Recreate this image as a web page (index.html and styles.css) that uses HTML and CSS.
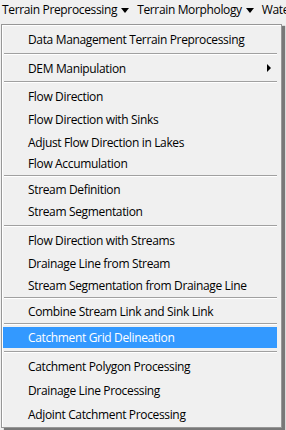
FILE: index.html
```html
<!DOCTYPE html>
<html>
<head>
<meta charset="utf-8">
<link rel="stylesheet" href="styles.css">
</head>
<body>
<div class="menubar">
  <span class="mb-item">Terrain Preprocessing <span class="caret"></span></span>
  <span class="mb-item">Terrain Morphology <span class="caret"></span></span>
  <span class="mb-item">Watershed Processing</span>
</div>
<div class="menu-wrap">
  <div class="menu">
    <div class="item t">Data Management Terrain Preprocessing</div>
    <div class="sep"></div>
    <div class="item sub">DEM Manipulation <span class="arrow"></span></div>
    <div class="sep"></div>
    <div class="item">Flow Direction</div>
    <div class="item t">Flow Direction with Sinks</div>
    <div class="item">Adjust Flow Direction in Lakes</div>
    <div class="item s">Flow Accumulation</div>
    <div class="sep"></div>
    <div class="item s">Stream Definition</div>
    <div class="item t">Stream Segmentation</div>
    <div class="sep"></div>
    <div class="item">Flow Direction with Streams</div>
    <div class="item t">Drainage Line from Stream</div>
    <div class="item s">Stream Segmentation from Drainage Line</div>
    <div class="sep"></div>
    <div class="item s">Combine Stream Link and Sink Link</div>
    <div class="sep"></div>
    <div class="item active">Catchment Grid Delineation</div>
    <div class="sep after-active"></div>
    <div class="item m">Catchment Polygon Processing</div>
    <div class="item l">Drainage Line Processing</div>
    <div class="item">Adjoint Catchment Processing</div>
  </div>
</div>
</body>
</html>
```
FILE: styles.css
```css
html, body {
  margin: 0;
  padding: 0;
}
body {
  width: 286px;
  height: 430px;
  overflow: hidden;
  background: #f0f0f0;
  font-family: "Open Sans", "Noto Sans", sans-serif;
  font-size: 12px;
  letter-spacing: -0.35px;
  color: #000;
}
.menubar {
  height: 24px;
  display: flex;
  align-items: flex-start;
  white-space: nowrap;
  overflow: hidden;
  padding-left: 2px;
  gap: 8px;
  line-height: 20px;
}
.mb-item {
  display: inline-flex;
  align-items: center;
  flex: none;
}
.caret {
  display: inline-block;
  width: 0;
  height: 0;
  margin-left: 4px;
  border-left: 4px solid transparent;
  border-right: 4px solid transparent;
  border-top: 5px solid #000;
}
.menu-wrap {
  margin-left: 1px;
  width: 281px;
  box-shadow: 3px 2px 1px rgba(0,0,0,0.5);
}
.menu {
  border: 1px solid #979797;
  background: #f0f0f0;
  padding: 2px 4px 2px 1px;
  box-shadow: inset 1px 1px 0 #fff;
}
.item {
  height: 22px;
  padding-left: 25px;
  white-space: nowrap;
  display: flex;
  align-items: center;
}
.item.t {
  height: 24px;
}
.item.s {
  height: 20px;
}
.item.m {
  height: 23px;
}
.item.l {
  height: 25px;
}
.item.sub {
  justify-content: space-between;
  padding-right: 6px;
}
.arrow {
  width: 0;
  height: 0;
  border-top: 4px solid transparent;
  border-bottom: 4px solid transparent;
  border-left: 4px solid #000;
}
.item.active {
  height: 21px;
  margin-top: 2px;
  background: #3399ff;
  color: #fff;
}
.sep {
  margin: 2px 0 2px 1px;
  border-top: 1px solid #a0a0a0;
  border-bottom: 1px solid #fff;
}
.sep.after-active {
  margin-top: 3px;
}
```
